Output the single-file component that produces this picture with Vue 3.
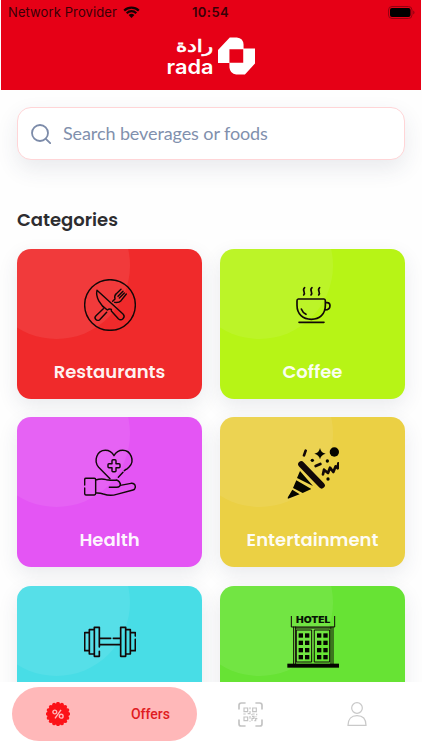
<template>
  <div class="screen">
    <header class="header">
      <div class="status">
        <div class="carrier">
          <span>Network Provider</span>
          <svg class="wifi" viewBox="0 0 17 12">
            <path d="M1.2 4.6a10.4 10.4 0 0 1 14.6 0M3.7 7.2a6.8 6.8 0 0 1 9.6 0" />
            <path class="solid" d="M5.6 9.1a4.2 4.2 0 0 1 5.8 0L8.5 12z" />
          </svg>
        </div>
        <span class="time">10:54</span>
        <svg class="battery" viewBox="0 0 27 13">
          <rect class="shell" x="0.5" y="0.5" width="23.5" height="12" rx="3.5" />
          <rect x="2" y="2" width="20.5" height="9" rx="2" />
          <path class="cap" d="M25.2 4.6a2.2 2.2 0 0 1 0 4z" />
        </svg>
      </div>
      <div class="logo">
        <svg class="wordmark" viewBox="0 0 47 38">
          <text class="arabic" x="28.500" y="15" textLength="37" lengthAdjust="spacingAndGlyphs">رادة</text>
          <text class="latin" x="0.500" y="36.800" textLength="47" lengthAdjust="spacingAndGlyphs">rada</text>
        </svg>
        <svg class="mark" viewBox="0 0 110 112">
          <path
            fill-rule="evenodd"
            d="M0 38 35 1H56Q75 3 76 22V34H110V78L80 111H54Q36 109 34 90V77H0ZM34 36V76H75V36Z"
          />
        </svg>
      </div>
    </header>

    <main class="content">
      <label class="search">
        <svg viewBox="0 0 20 20">
          <circle cx="9" cy="9" r="8" />
          <path d="m14.8 14.8 4.4 4.4" />
        </svg>
        <input type="text" placeholder="Search beverages or foods" />
      </label>

      <h2 class="title">Categories</h2>

      <div class="grid">
        <div v-for="item in categories" :key="item.id" class="card" :class="item.id">
          <svg v-if="item.id === 'restaurants'" class="icon" viewBox="0 0 156 156">
            <circle cx="78" cy="78" r="76" />
            <path d="M39 34C34 53 48 79 70 93Q76 88 82 91L82 96 103 119A9.500 9.500 0 0 0 117 105Z" />
            <path d="M58 89 36 110A8 8 0 0 0 47 122L68 100M86 67 93 60Q90 50 97 44L111 31M92 70Q105 72 111 65L127 45M102 52 117 37M106 57 121 42" />
          </svg>

          <svg v-else-if="item.id === 'coffee'" class="icon bold" viewBox="0 0 156 156">
            <path d="M34 60H111Q115 60 115 65V79C115 106 98 121 73 121S30 106 30 79V65Q30 60 34 60ZM115 71H120Q129 71 129 80 129 92 113 93M43 90Q47 101 57 106M36 130H111" />
            <path d="M53 26C43 34 58 39 50 48M75 26C65 34 80 39 72 48M98 26C88 34 103 39 95 48" />
          </svg>

          <svg v-else-if="item.id === 'health'" class="icon" viewBox="0 0 156 156">
            <path d="M121 71 126 67M117 76 103 91M78 95 44 61C28 42 38 10 64 10Q81 10 90 26 99 10 116 10C141 10 153 42 136 59L128 67" />
            <path d="M87 38H93Q96 38 96 41V50H105Q108 50 108 53V59Q108 62 105 62H96V71Q96 74 93 74H87Q84 74 84 71V62H75Q72 62 72 59V53Q72 50 75 50H84V41Q84 38 87 38Z" />
            <path d="M2 114V98Q2 94 6 94H31Q35 94 35 98V139Q35 144 31 144H6Q2 144 2 139V123M35 99Q51 94 67 98 89 101 98 99 109 103 109 115L141 109Q153 108 154 119 154 127 147 129L98 142Q79 148 58 141 47 137 35 138M76 121H98Q110 121 109 109" />
          </svg>

          <svg v-else-if="item.id === 'entertainment'" class="icon party" viewBox="0 0 156 156">
            <path class="bar" d="m43 52 61 63" />
            <path class="fill" d="M3 155Q1 153 3 150L16 128 38 142ZM18 123 28 100 73 126 47 138ZM30 93 39 72 78 117Z" />
            <path class="fill" d="M99 3Q102 18 116 20 102 23 99 37 96 23 82 20 96 18 99 3Z" />
            <circle class="fill" cx="142" cy="15" r="14" />
            <circle class="fill" cx="76" cy="40" r="5" />
            <circle class="fill" cx="121" cy="42" r="5" />
            <circle class="fill" cx="123" cy="96" r="5" />
            <path class="strip" d="m56 11-5 14M86 57l14-6M108 82l3-14 12 10 6-16 10 13 7-17 6 6 2-15" />
          </svg>

          <svg v-else-if="item.id === 'fitness'" class="icon bold" viewBox="0 0 156 156">
            <path d="M16 50H2V104H16M31 41H16V114H31M46 93V34H31V121H46V106M46 67H80M88 67H110M46 86H110M110 34H125V121H110ZM125 41H139V114H125M139 50H154V60M154 70V104H139" />
          </svg>

          <svg v-else class="icon hotel-icon" viewBox="0 0 156 156">
            <text x="27" y="22" textLength="103" lengthAdjust="spacingAndGlyphs">HOTEL</text>
            <path d="M13 0V33H143V0M20 33V143M26 33V143M132 33V143M138 33V143M26 36H132M29 42H74V138H29ZM83 42H128V138H83Z" />
            <rect class="fill" x="1" y="143" width="155" height="12" />
            <template v-for="y in [52, 74, 96, 117]" :key="y">
              <rect v-for="x in [35, 54, 90, 109]" :key="x" class="fill" :x="x" :y="y" width="13" height="13" />
            </template>
          </svg>
          <span v-if="item.label" class="label">{{ item.label }}</span>
        </div>
      </div>
    </main>

    <nav class="tabs">
      <button class="tab active">
        <svg class="badge" viewBox="-12 -12 24 24">
          <circle r="10.600" />
          <circle v-for="p in scallops" :key="p.id" :cx="p.x" :cy="p.y" r="1.900" />
          <g class="percent">
            <circle cx="-3.200" cy="-2" r="1.900" />
            <circle cx="3.200" cy="2.200" r="1.900" />
            <path d="M3-4.200-3 4.400" />
          </g>
        </svg>
        <span>Offers</span>
      </button>
      <button class="tab">
        <svg class="qr" viewBox="0 0 75 75">
          <path class="frame" d="M3 21V10Q3 3 10 3H21M54 3H65Q72 3 72 10V21M72 54V65Q72 72 65 72H54M21 72H10Q3 72 3 65V54" />
          <path d="M18 18H29V29H18ZM44 18H55V29H44ZM18 45H29V56H18ZM36 16V22M36 27V35H29M16 36H23M43 36H50M56 35V40M36 42V50M36 56V59M42 43H48V49H42V57M49 56H53V50H58M54 43V46M40 38H43" />
        </svg>
      </button>
      <button class="tab">
        <svg class="person" viewBox="0 0 58 72">
          <circle cx="29" cy="18" r="16" />
          <path d="M2 70C2 51 12 41 29 41S56 51 56 70Z" />
        </svg>
      </button>
    </nav>
  </div>
</template>

<script setup>
const categories = [
  { id: 'restaurants', label: 'Restaurants' },
  { id: 'coffee', label: 'Coffee' },
  { id: 'health', label: 'Health' },
  { id: 'entertainment', label: 'Entertainment' },
  { id: 'fitness', label: '' },
  { id: 'hotel', label: '' },
]

// bumps around the edge of the offers badge
const scallops = Array.from({ length: 16 }, (_, i) => ({
  id: i,
  x: Math.cos((i * Math.PI) / 8) * 10.2,
  y: Math.sin((i * Math.PI) / 8) * 10.2,
}))
</script>

<style>
body {
  margin: 0;
  background: #fff;
}
</style>

<style scoped>
.screen {
  width: 422px;
  height: 750px;
  display: flex;
  flex-direction: column;
  overflow: hidden;
  background: #fefefe;
  font-family: Poppins, Inter, sans-serif;
}

svg {
  display: block;
  flex-shrink: 0;
}

.header {
  height: 90px;
  margin: 0 1px;
  flex-shrink: 0;
  background: #e60016;
}

.status {
  height: 24px;
  padding: 0 6px 0 7px;
  display: grid;
  grid-template-columns: 1fr auto 1fr;
  align-items: center;
  font-family: Inter, sans-serif;
  font-size: 13px;
  color: #390006;
}

.carrier {
  display: flex;
  align-items: center;
  gap: 6px;
  letter-spacing: 0.1px;
  white-space: nowrap;
}

.wifi {
  width: 17px;
  height: 12px;
  fill: none;
  stroke: #180003;
  stroke-width: 2.2;
}

.wifi .solid {
  fill: #180003;
  stroke: none;
}

.time {
  margin-right: 2px;
  font-weight: 600;
  letter-spacing: 0.4px;
}

.battery {
  width: 27px;
  height: 13px;
  justify-self: end;
}

.battery .shell {
  fill: none;
  stroke: #960010;
}

.battery .cap {
  fill: #960010;
}

.logo {
  display: flex;
  justify-content: center;
  align-items: center;
  gap: 5px;
  padding: 13px 1px 0 0;
}

.wordmark {
  width: 47px;
  height: 38px;
  overflow: visible;
  fill: #fff;
}

.arabic {
  font: 17px "DejaVu Sans", sans-serif;
  text-anchor: middle;
  stroke: #fff;
  stroke-width: 0.7;
}

.latin {
  font: 600 20px Inter, sans-serif;
}

.mark {
  width: 37px;
  height: 38px;
  fill: #fff;
}

.content {
  flex: 1;
  min-height: 0;
  overflow: hidden;
  padding: 17px 17px 0;
}

.search {
  height: 53px;
  box-sizing: border-box;
  display: flex;
  align-items: center;
  gap: 12px;
  padding: 0 13px;
  border: 1px solid #ffd5d7;
  border-radius: 14px;
  background: #fff;
  box-shadow: 0 9px 22px rgba(50, 55, 90, 0.1);
}

.search svg {
  width: 20px;
  height: 20px;
  fill: none;
  stroke: #7c8ba9;
  stroke-width: 1.8;
  stroke-linecap: round;
}

.search input {
  flex: 1;
  padding: 0 0 1px;
  border: 0;
  outline: 0;
  background: none;
  font: 18px Lato, sans-serif;
  letter-spacing: -0.1px;
}

.search input::placeholder {
  color: #8190ad;
  opacity: 1;
}

.title {
  margin: 46px 0 14.6px;
  font-size: 18px;
  line-height: 28px;
  font-weight: 600;
  color: #2d2d30;
}

.grid {
  display: grid;
  grid-template-columns: 185px 185px;
  grid-auto-rows: 150px;
  gap: 18.5px 18px;
}

.card {
  position: relative;
  overflow: hidden;
  display: flex;
  flex-direction: column;
  align-items: center;
  padding-top: 30px;
  box-sizing: border-box;
  border-radius: 14px;
  box-shadow: 0 7px 20px rgba(50, 55, 90, 0.1);
}

.card::before {
  content: "";
  position: absolute;
  left: -34px;
  top: -57px;
  width: 147px;
  height: 147px;
  border-radius: 50%;
  background: rgba(255, 255, 255, 0.08);
}

.restaurants { background: #f02a2b; }
.coffee { background: #b7f416; }
.health { background: #e455f4; }
.entertainment { background: #ebd044; }
.fitness { background: #48dde6; }
.hotel { background: #67e334; }

.icon {
  position: relative;
  width: 52px;
  height: 52px;
  fill: none;
  stroke: #120808;
  stroke-width: 4.3;
  stroke-linecap: round;
  stroke-linejoin: round;
}

.icon.bold {
  stroke-width: 5;
}

.icon .fill {
  fill: #050500;
  stroke: none;
}

.party .bar {
  stroke-width: 19;
}

.party .strip {
  stroke-width: 8;
}

.hotel-icon {
  stroke-width: 3;
  stroke-linejoin: miter;
}

.hotel-icon text {
  font: 900 26px Inter, sans-serif;
  fill: #071403;
  stroke: none;
}

.label {
  position: relative;
  margin-top: 27px;
  font-size: 18px;
  line-height: 28px;
  font-weight: 600;
  color: rgba(255, 255, 255, 0.95);
}

.tabs {
  height: 68px;
  flex-shrink: 0;
  box-sizing: border-box;
  display: grid;
  grid-template-columns: 185px 106px 108px;
  padding: 5px 12px 9px;
  background: #fff;
}

.tab {
  display: flex;
  align-items: center;
  justify-content: center;
  padding: 0;
  border: 0;
  background: none;
  font: 500 14px Roboto, sans-serif;
}

.tab.active {
  justify-content: space-between;
  padding: 0 27px 0 34px;
  border-radius: 27px;
  background: #ffb8b9;
  color: #df1c22;
}

.badge {
  width: 24px;
  height: 24px;
  fill: #fc1218;
}

.percent {
  fill: none;
  stroke: #ffb8b9;
  stroke-width: 1.4;
}

.qr {
  width: 25px;
  height: 25px;
  fill: none;
  stroke: #c3c3c3;
  stroke-width: 3.5;
}

.qr .frame {
  stroke-width: 5;
  stroke-linecap: round;
}

.person {
  width: 20px;
  height: 24px;
  fill: none;
  stroke: #c9c9c9;
  stroke-width: 3.6;
}
</style>
